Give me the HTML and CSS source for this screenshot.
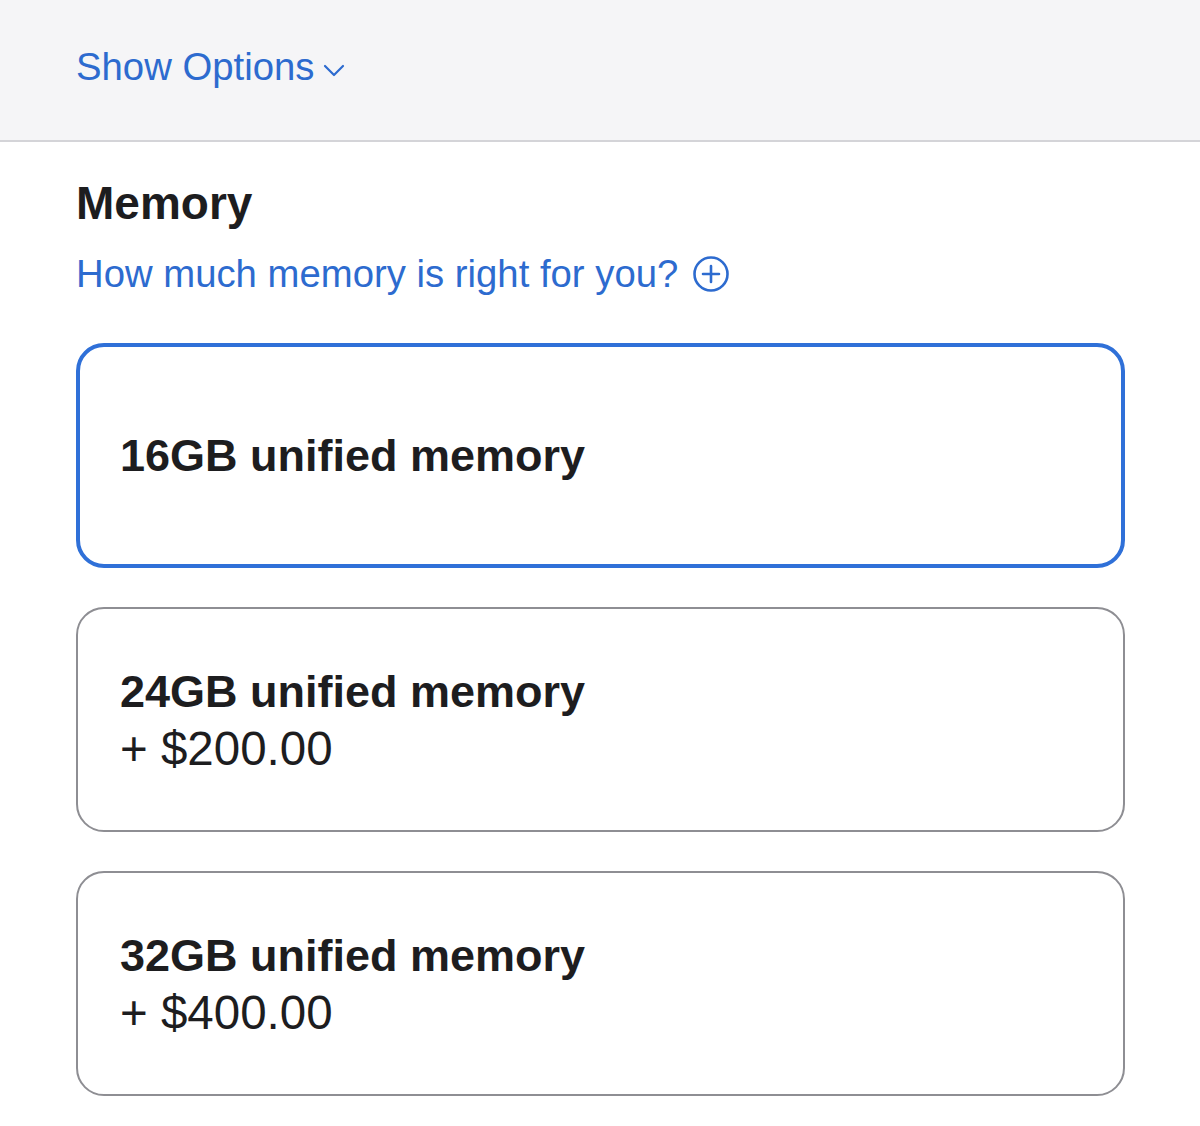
FILE: index.html
```html
<!DOCTYPE html>
<html lang="en">
<head>
  <meta charset="UTF-8" />
  <meta name="viewport" content="width=device-width, initial-scale=1.0"/>
  <title>Memory</title>
  <link rel="stylesheet" href="styles.css">
</head>
<body>
  <div class="options-bar">
    <a class="link show-options" href="#">Show Options
      <svg class="chevron" width="22" height="13" viewBox="0 0 22 13">
        <path d="M2 2 L11 11 L20 2" fill="none" stroke="currentColor" stroke-width="2.2" stroke-linecap="round" stroke-linejoin="round"/>
      </svg>
    </a>
  </div>

  <div class="section">
    <h2 class="section-title">Memory</h2>
    <a class="link help" href="#">How much memory is right for you?
      <svg class="plus-circle" width="38" height="38" viewBox="0 0 38 38">
        <circle cx="19" cy="19" r="16.5" fill="none" stroke="currentColor" stroke-width="2.6"/>
        <path d="M19 11 V27 M11 19 H27" fill="none" stroke="currentColor" stroke-width="2.6" stroke-linecap="round"/>
      </svg>
    </a>

    <div class="choices">
      <div class="choice selected">
        <span class="choice-name">16GB unified memory</span>
      </div>
      <div class="choice">
        <span class="choice-name">24GB unified memory</span>
        <span class="choice-price">+ $200.00</span>
      </div>
      <div class="choice">
        <span class="choice-name">32GB unified memory</span>
        <span class="choice-price">+ $400.00</span>
      </div>
    </div>
  </div>
</body>
</html>
```

FILE: styles.css
```css
body {
  margin: 0;
  background-color: #fff;
  color: #1d1d1f;
  font-family: "Liberation Sans", Arial, sans-serif;
}

.link {
  color: #2d6bcf;
  text-decoration: none;
  font-size: 38.3px;
  line-height: 46px;
  display: inline-flex;
  align-items: center;
}

.options-bar {
  background-color: #f5f5f7;
  border-bottom: 2px solid #d4d4d8;
  padding: 44px 76px 50px;
}

.chevron {
  margin-left: 9px;
  margin-top: 6px;
}

.section {
  padding: 0 75px 0 76px;
}

.section-title {
  margin: 33px 0 0;
  font-size: 46px;
  line-height: 56px;
  font-weight: bold;
}

.help {
  margin-top: 20px;
}

.plus-circle {
  margin-left: 14px;
}

.choices {
  display: flex;
  flex-direction: column;
  gap: 39px;
  margin-top: 46px;
}

.choice {
  box-sizing: border-box;
  height: 225px;
  border: 2px solid #8e8e93;
  border-radius: 28px;
  padding: 0 42px;
  display: flex;
  flex-direction: column;
  justify-content: center;
}

.choice.selected {
  border: 4px solid #2f70d8;
  padding: 0 40px;
}

.choice-name {
  font-size: 45px;
  font-weight: bold;
  line-height: 57px;
}

.choice-price {
  font-size: 47.5px;
  line-height: 57px;
}
```
